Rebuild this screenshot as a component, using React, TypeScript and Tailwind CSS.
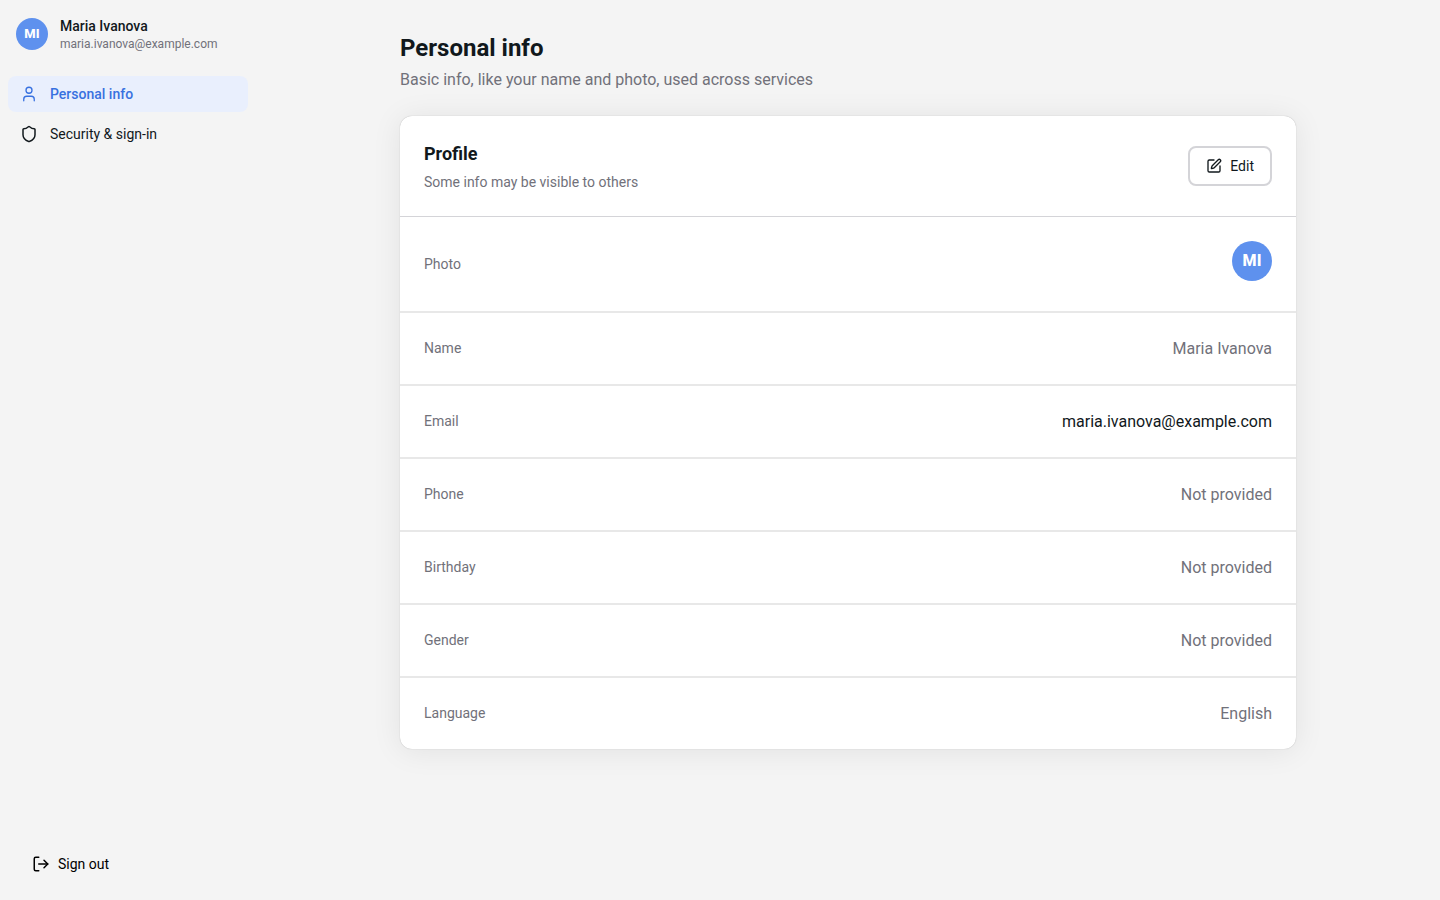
import React from "react";
import { LogOut, Shield, SquarePen, User } from "lucide-react";

interface ProfileField {
  label: string;
  value: string;
  strong?: boolean;
}

const fields: ProfileField[] = [
  { label: "Name", value: "Maria Ivanova" },
  { label: "Email", value: "maria.ivanova@example.com", strong: true },
  { label: "Phone", value: "Not provided" },
  { label: "Birthday", value: "Not provided" },
  { label: "Gender", value: "Not provided" },
  { label: "Language", value: "English" },
];

const Sidebar: React.FC = () => {
  return (
    <aside className="flex w-64 shrink-0 flex-col px-2 py-4">
      <div className="flex items-center gap-3 px-2">
        <div className="flex h-8 w-8 items-center justify-center rounded-full bg-[#5e91ee] text-[13px] font-extrabold text-white">
          MI
        </div>
        <div>
          <p className="text-sm font-medium">Maria Ivanova</p>
          <p className="text-xs text-[#71717a]">maria.ivanova@example.com</p>
        </div>
      </div>

      <nav className="mt-6 flex flex-col gap-1">
        <a
          href="#personal-info"
          className="flex h-9 items-center gap-3 rounded-lg bg-[#e9effd] px-3 text-sm font-medium text-[#3871e0]"
        >
          <User size={18} strokeWidth={1.75} />
          Personal info
        </a>
        <a href="#security" className="flex h-9 items-center gap-3 rounded-lg px-3 text-sm">
          <Shield size={18} strokeWidth={2} />
          Security &amp; sign-in
        </a>
      </nav>

      <button className="mt-auto flex h-10 items-center gap-2 px-6 text-sm text-black">
        <LogOut size={18} />
        Sign out
      </button>
    </aside>
  );
};

const ProfileCard: React.FC = () => {
  return (
    <section className="mt-6 rounded-xl bg-white shadow-[0_0_1px_rgba(0,0,0,0.3),0_2px_30px_rgba(0,0,0,0.08)]">
      <div className="flex items-center justify-between border-b border-[#d4d4d8] px-6 py-6">
        <div>
          <h2 className="text-lg font-bold">Profile</h2>
          <p className="mt-1 text-sm text-[#71717a]">Some info may be visible to others</p>
        </div>
        <button className="flex h-10 items-center gap-2 rounded-lg border-2 border-[#d4d4d8] px-4 text-sm">
          <SquarePen size={16} />
          Edit
        </button>
      </div>

      <dl className="divide-y-2 divide-[#e8e8e8]">
        <div className="flex items-center justify-between p-6">
          <dt className="text-sm text-[#71717a]">Photo</dt>
          <dd className="pb-1.5">
            <div className="flex h-10 w-10 items-center justify-center rounded-full bg-[#5e91ee] text-base font-extrabold text-white">
              MI
            </div>
          </dd>
        </div>
        {fields.map((field) => (
          <div key={field.label} className="flex items-start justify-between p-6">
            <dt className="pt-px text-sm text-[#71717a]">{field.label}</dt>
            <dd className={field.strong ? "leading-[23px]" : "leading-[23px] text-[#71717a]"}>
              {field.value}
            </dd>
          </div>
        ))}
      </dl>
    </section>
  );
};

const App: React.FC = () => {
  return (
    <div className="flex min-h-screen bg-[#f4f4f4] font-[Roboto,sans-serif] text-[#11181c]">
      <Sidebar />
      <main className="flex-1 px-6 py-8">
        <div className="mx-auto max-w-4xl">
          <h1 className="text-2xl font-bold">Personal info</h1>
          <p className="mt-1 text-[#71717a]">
            Basic info, like your name and photo, used across services
          </p>
          <ProfileCard />
        </div>
      </main>
    </div>
  );
};

export default App;
